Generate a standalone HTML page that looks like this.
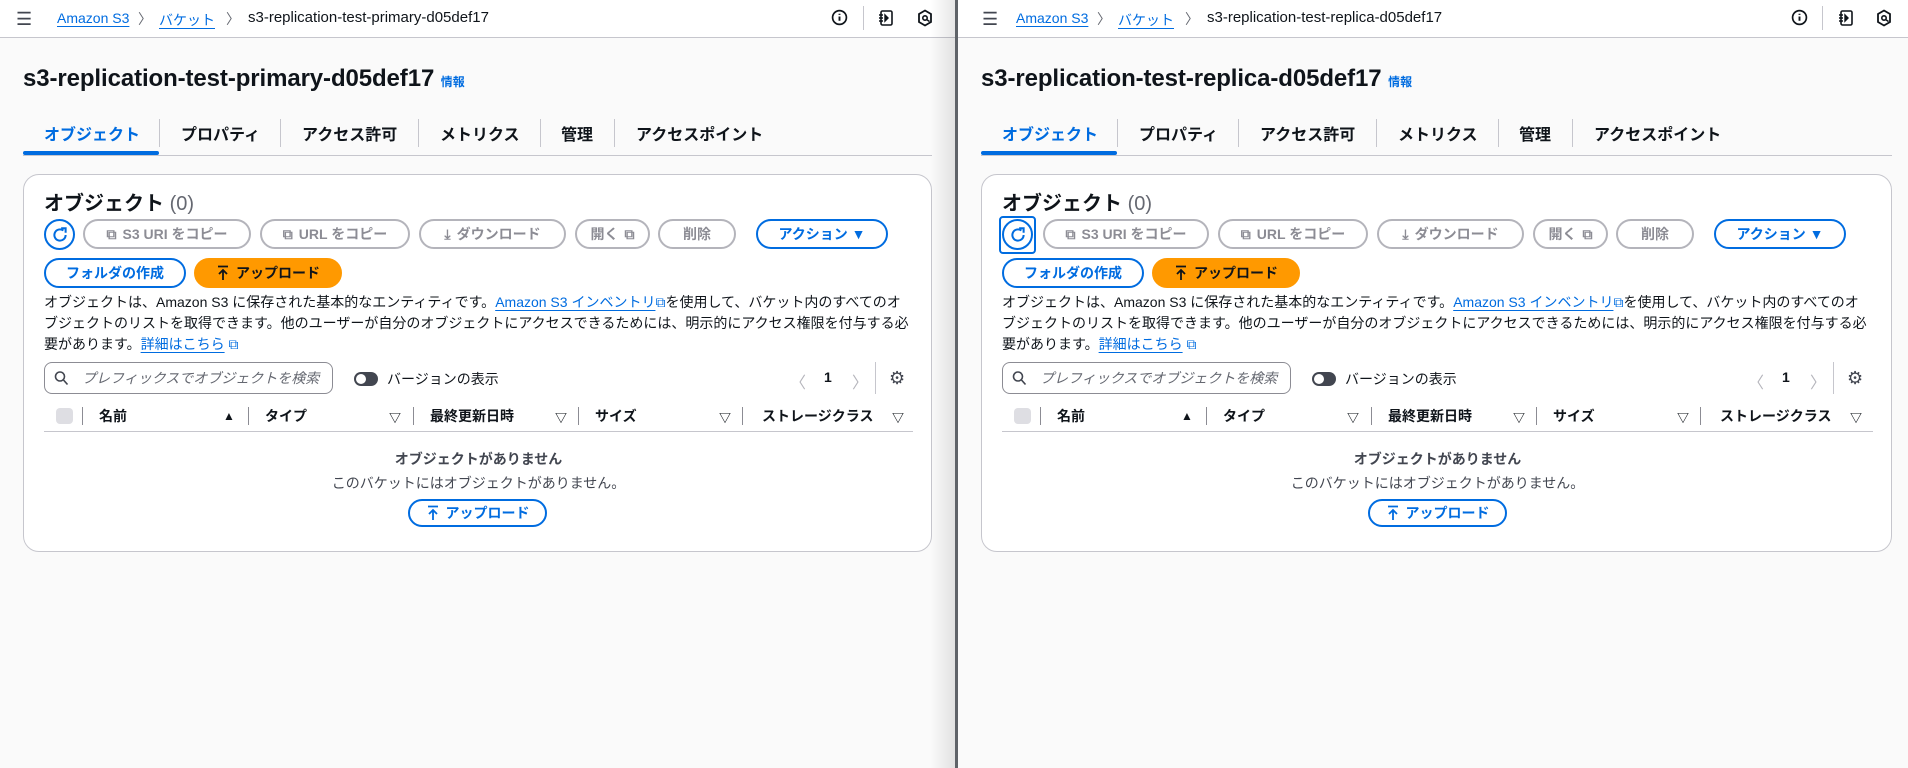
<!DOCTYPE html>
<html><head><meta charset="utf-8">
<style>
*{box-sizing:border-box;margin:0;padding:0}
body{width:1908px;height:768px;overflow:hidden;background:#fff;font-family:"Liberation Sans","Noto Sans CJK JP",sans-serif;color:#0f141a;position:relative}
.pane{position:absolute;top:0;height:768px;background:#fafafa;overflow:hidden}
.a{position:absolute;white-space:nowrap}
.hdr{position:absolute;left:0;top:0;right:0;height:38px;background:#fff;border-bottom:1px solid #c6c6cd}
.lnk{color:#006ce0;text-decoration:underline;text-underline-offset:3px}
.bc{position:absolute;top:10px;font-size:14px;white-space:nowrap}
.chev{position:absolute;top:9px;font-size:14px;color:#656871}
.btn{position:absolute;height:30px;border:2px solid #b4b4bb;border-radius:16px;color:#8c8c94;font-size:14px;font-weight:bold;display:flex;align-items:center;justify-content:center;gap:6px;background:#fff;white-space:nowrap}
.bb{border-color:#006ce0;color:#006ce0}
.tab{position:absolute;top:121px;font-size:16px;font-weight:bold;color:#0f141a}
.tsep{position:absolute;top:119px;width:1px;height:28px;background:#c6c6cd}
.th{position:absolute;top:406px;font-size:14px;font-weight:bold}
.cs{position:absolute;top:407px;width:1px;height:18px;background:#8c8c94}
.para{position:absolute;font-size:14px;line-height:21px;color:#0f141a}
</style></head><body>

<div class="pane" style="left:0;width:956px">
 <div class="hdr"></div>
 <div class="a" style="left:16px;top:12px;font-size:18px;line-height:14px;color:#424650">☰</div>
 <div class="bc lnk" style="left:57px">Amazon S3</div>
 <div class="chev" style="left:138px">〉</div>
 <div class="bc lnk" style="left:159px">バケット</div>
 <div class="chev" style="left:226px">〉</div>
 <div class="bc" style="left:248px;font-size:15px;top:9px">s3-replication-test-primary-d05def17</div>
 <svg class="a" style="left:831px;top:9px" width="17" height="17" viewBox="0 0 16 16"><circle cx="8" cy="8" r="6.5" fill="none" stroke="#0f141a" stroke-width="1.6"/><path d="M8 7v4M8 4.5v1" stroke="#0f141a" stroke-width="1.8"/></svg>
 <div class="a" style="left:863px;top:6px;width:1px;height:24px;background:#c6c6cd"></div>
 <svg class="a" style="left:878px;top:9px" width="16" height="18" viewBox="0 0 16 18"><rect x="3" y="2" width="11" height="14" rx="1.5" fill="none" stroke="#0f141a" stroke-width="1.6"/><path d="M1 6h4M1 9h4M1 12h4M7 6l3 3-3 3z" stroke="#0f141a" stroke-width="1.4" fill="#0f141a"/></svg>
 <svg class="a" style="left:917px;top:9px" width="16" height="18" viewBox="0 0 16 18"><path d="M8 1.5l6 3.5v8l-6 3.5-6-3.5V5z" fill="none" stroke="#0f141a" stroke-width="1.8"/><circle cx="8" cy="9" r="2.2" fill="none" stroke="#0f141a" stroke-width="1.6"/><path d="M9.5 10.5l3 2" stroke="#0f141a" stroke-width="1.6"/></svg>

 <div class="a" style="left:23px;top:65px;font-size:24px;font-weight:bold;letter-spacing:-0.1px">s3-replication-test-primary-d05def17 <span style="font-size:12px;color:#006ce0;font-weight:bold;letter-spacing:0">情報</span></div>

 <div class="tab" style="left:44px;color:#006ce0">オブジェクト</div>
 <div class="tsep" style="left:159px"></div>
 <div class="tab" style="left:181px">プロパティ</div>
 <div class="tsep" style="left:280px"></div>
 <div class="tab" style="left:302px">アクセス許可</div>
 <div class="tsep" style="left:418px"></div>
 <div class="tab" style="left:440px">メトリクス</div>
 <div class="tsep" style="left:540px"></div>
 <div class="tab" style="left:561px">管理</div>
 <div class="tsep" style="left:614px"></div>
 <div class="tab" style="left:636px">アクセスポイント</div>
 <div class="a" style="left:23px;top:155px;width:909px;height:1px;background:#c6c6cd"></div>
 <div class="a" style="left:23px;top:151px;width:136px;height:4px;background:#006ce0;border-radius:2px"></div>

 <div class="a" style="left:23px;top:174px;width:909px;height:378px;background:#fff;border:1px solid #c6c6cd;border-radius:16px"></div>
 <div class="a" style="left:44px;top:187px;font-size:20px;font-weight:bold">オブジェクト <span style="font-weight:normal;color:#656871">(0)</span></div>

 <div class="btn bb" style="left:44px;top:219px;width:31px;height:31px"><svg width="18" height="18" viewBox="0 0 16 16"><path d="M13 8A5 5 0 1 1 11 4" fill="none" stroke="#006ce0" stroke-width="1.8"/><path d="M9 2h4v4" fill="none" stroke="#006ce0" stroke-width="1.8"/></svg></div>
 <div class="btn" style="left:83px;top:219px;width:168px"><span>⧉</span>S3 URI をコピー</div>
 <div class="btn" style="left:260px;top:219px;width:150px"><span>⧉</span>URL をコピー</div>
 <div class="btn" style="left:419px;top:219px;width:147px"><span>⤓</span>ダウンロード</div>
 <div class="btn" style="left:575px;top:219px;width:75px">開く <span>⧉</span></div>
 <div class="btn" style="left:658px;top:219px;width:78px">削除</div>
 <div class="btn bb" style="left:756px;top:219px;width:132px">アクション ▼</div>
 <div class="btn bb" style="left:44px;top:258px;width:142px">フォルダの作成</div>
 <div class="btn" style="left:194px;top:258px;width:148px;background:#ff9900;border-color:#ff9900;color:#0f141a"><svg width="14" height="16" viewBox="0 0 14 16"><path d="M2 1.5h10M7 15V5M3 9l4-4 4 4" fill="none" stroke="#0f141a" stroke-width="1.8"/></svg>アップロード</div>

 <div class="para" style="left:44px;top:292px">オブジェクトは、Amazon S3 に保存された基本的なエンティティです。<span class="lnk">Amazon S3 インベントリ</span><span style="color:#006ce0">⧉</span>を使用して、バケット内のすべてのオ<br>ブジェクトのリストを取得できます。他のユーザーが自分のオブジェクトにアクセスできるためには、明示的にアクセス権限を付与する必<br>要があります。<span class="lnk">詳細はこちら</span> <span style="color:#006ce0">⧉</span></div>

 <div class="a" style="left:44px;top:362px;width:289px;height:32px;border:1px solid #8c8c94;border-radius:8px;background:#fff"></div>
 <svg class="a" style="left:54px;top:370px" width="15" height="16" viewBox="0 0 15 16"><circle cx="6" cy="6.5" r="4.5" fill="none" stroke="#424650" stroke-width="1.6"/><path d="M9.5 10l4 4.5" stroke="#424650" stroke-width="1.6"/></svg>
 <div class="a" style="left:82px;top:368px;font-size:14px;color:#656871;font-style:italic">プレフィックスでオブジェクトを検索</div>
 <div class="a" style="left:354px;top:372px;width:24px;height:14px;border-radius:7px;background:#424650"></div>
 <div class="a" style="left:356px;top:374px;width:10px;height:10px;border-radius:5px;background:#fff"></div>
 <div class="a" style="left:387px;top:369px;font-size:14px">バージョンの表示</div>
 <div class="a" style="left:790px;top:369px;font-size:16px;color:#b4b4bb">〈</div>
 <div class="a" style="left:824px;top:369px;font-size:14px;font-weight:bold">1</div>
 <div class="a" style="left:852px;top:369px;font-size:16px;color:#b4b4bb">〉</div>
 <div class="a" style="left:875px;top:362px;width:1px;height:32px;background:#c6c6cd"></div>
 <div class="a" style="left:889px;top:368px;font-size:18px;color:#424650">⚙</div>

 <div class="a" style="left:56px;top:408px;width:17px;height:16px;border-radius:4px;background:#dedee3"></div>
 <div class="cs" style="left:82px"></div>
 <div class="th" style="left:99px">名前</div><div class="th" style="left:223px;font-size:12px;top:409px">▲</div>
 <div class="cs" style="left:248px"></div>
 <div class="th" style="left:265px">タイプ</div><div class="th" style="left:389px;font-size:12px;top:409px">▽</div>
 <div class="cs" style="left:413px"></div>
 <div class="th" style="left:430px">最終更新日時</div><div class="th" style="left:555px;font-size:12px;top:409px">▽</div>
 <div class="cs" style="left:578px"></div>
 <div class="th" style="left:595px">サイズ</div><div class="th" style="left:719px;font-size:12px;top:409px">▽</div>
 <div class="cs" style="left:742px"></div>
 <div class="th" style="left:762px">ストレージクラス</div><div class="th" style="left:892px;font-size:12px;top:409px">▽</div>
 <div class="a" style="left:44px;top:431px;width:869px;height:1px;background:#c6c6cd"></div>

 <div class="a" style="left:44px;top:449px;width:869px;text-align:center;font-size:14px;font-weight:bold;color:#424650">オブジェクトがありません</div>
 <div class="a" style="left:44px;top:473px;width:869px;text-align:center;font-size:14px;color:#424650">このバケットにはオブジェクトがありません。</div>
 <div class="btn bb" style="left:408px;top:499px;width:139px;height:28px"><svg width="14" height="16" viewBox="0 0 14 16"><path d="M2 1.5h10M7 15V5M3 9l4-4 4 4" fill="none" stroke="#006ce0" stroke-width="1.8"/></svg>アップロード</div>

 <div class="a" style="left:930px;top:0;width:26px;height:768px;background:linear-gradient(to right,rgba(0,0,0,0),rgba(0,0,0,0.10))"></div>
</div>
<div class="a" style="left:955px;top:0;width:3px;height:768px;background:#5f6368"></div>

<div class="pane" style="left:958px;width:950px">
 <div class="hdr"></div>
 <div class="a" style="left:24px;top:12px;font-size:18px;line-height:14px;color:#424650">☰</div>
 <div class="bc lnk" style="left:58px">Amazon S3</div>
 <div class="chev" style="left:139px">〉</div>
 <div class="bc lnk" style="left:160px">バケット</div>
 <div class="chev" style="left:227px">〉</div>
 <div class="bc" style="left:249px;font-size:15px;top:9px">s3-replication-test-replica-d05def17</div>
 <svg class="a" style="left:833px;top:9px" width="17" height="17" viewBox="0 0 16 16"><circle cx="8" cy="8" r="6.5" fill="none" stroke="#0f141a" stroke-width="1.6"/><path d="M8 7v4M8 4.5v1" stroke="#0f141a" stroke-width="1.8"/></svg>
 <div class="a" style="left:864px;top:6px;width:1px;height:24px;background:#c6c6cd"></div>
 <svg class="a" style="left:880px;top:9px" width="16" height="18" viewBox="0 0 16 18"><rect x="3" y="2" width="11" height="14" rx="1.5" fill="none" stroke="#0f141a" stroke-width="1.6"/><path d="M1 6h4M1 9h4M1 12h4M7 6l3 3-3 3z" stroke="#0f141a" stroke-width="1.4" fill="#0f141a"/></svg>
 <svg class="a" style="left:918px;top:9px" width="16" height="18" viewBox="0 0 16 18"><path d="M8 1.5l6 3.5v8l-6 3.5-6-3.5V5z" fill="none" stroke="#0f141a" stroke-width="1.8"/><circle cx="8" cy="9" r="2.2" fill="none" stroke="#0f141a" stroke-width="1.6"/><path d="M9.5 10.5l3 2" stroke="#0f141a" stroke-width="1.6"/></svg>

 <div class="a" style="left:23px;top:65px;font-size:24px;font-weight:bold;letter-spacing:-0.1px">s3-replication-test-replica-d05def17 <span style="font-size:12px;color:#006ce0;font-weight:bold;letter-spacing:0">情報</span></div>

 <div class="tab" style="left:44px;color:#006ce0">オブジェクト</div>
 <div class="tsep" style="left:159px"></div>
 <div class="tab" style="left:181px">プロパティ</div>
 <div class="tsep" style="left:280px"></div>
 <div class="tab" style="left:302px">アクセス許可</div>
 <div class="tsep" style="left:418px"></div>
 <div class="tab" style="left:440px">メトリクス</div>
 <div class="tsep" style="left:540px"></div>
 <div class="tab" style="left:561px">管理</div>
 <div class="tsep" style="left:614px"></div>
 <div class="tab" style="left:636px">アクセスポイント</div>
 <div class="a" style="left:23px;top:155px;width:911px;height:1px;background:#c6c6cd"></div>
 <div class="a" style="left:23px;top:151px;width:136px;height:4px;background:#006ce0;border-radius:2px"></div>

 <div class="a" style="left:23px;top:174px;width:911px;height:378px;background:#fff;border:1px solid #c6c6cd;border-radius:16px"></div>
 <div class="a" style="left:44px;top:187px;font-size:20px;font-weight:bold">オブジェクト <span style="font-weight:normal;color:#656871">(0)</span></div>

 <div class="a" style="left:41px;top:216px;width:37px;height:38px;border:2px solid #006ce0;border-radius:4px"></div>
 <div class="btn bb" style="left:44px;top:219px;width:31px;height:31px"><svg width="18" height="18" viewBox="0 0 16 16"><path d="M13 8A5 5 0 1 1 11 4" fill="none" stroke="#006ce0" stroke-width="1.8"/><path d="M9 2h4v4" fill="none" stroke="#006ce0" stroke-width="1.8"/></svg></div>
 <div class="btn" style="left:85px;top:219px;width:166px"><span>⧉</span>S3 URI をコピー</div>
 <div class="btn" style="left:260px;top:219px;width:150px"><span>⧉</span>URL をコピー</div>
 <div class="btn" style="left:419px;top:219px;width:147px"><span>⤓</span>ダウンロード</div>
 <div class="btn" style="left:575px;top:219px;width:75px">開く <span>⧉</span></div>
 <div class="btn" style="left:658px;top:219px;width:78px">削除</div>
 <div class="btn bb" style="left:756px;top:219px;width:132px">アクション ▼</div>
 <div class="btn bb" style="left:44px;top:258px;width:142px">フォルダの作成</div>
 <div class="btn" style="left:194px;top:258px;width:148px;background:#ff9900;border-color:#ff9900;color:#0f141a"><svg width="14" height="16" viewBox="0 0 14 16"><path d="M2 1.5h10M7 15V5M3 9l4-4 4 4" fill="none" stroke="#0f141a" stroke-width="1.8"/></svg>アップロード</div>

 <div class="para" style="left:44px;top:292px">オブジェクトは、Amazon S3 に保存された基本的なエンティティです。<span class="lnk">Amazon S3 インベントリ</span><span style="color:#006ce0">⧉</span>を使用して、バケット内のすべてのオ<br>ブジェクトのリストを取得できます。他のユーザーが自分のオブジェクトにアクセスできるためには、明示的にアクセス権限を付与する必<br>要があります。<span class="lnk">詳細はこちら</span> <span style="color:#006ce0">⧉</span></div>

 <div class="a" style="left:44px;top:362px;width:289px;height:32px;border:1px solid #8c8c94;border-radius:8px;background:#fff"></div>
 <svg class="a" style="left:54px;top:370px" width="15" height="16" viewBox="0 0 15 16"><circle cx="6" cy="6.5" r="4.5" fill="none" stroke="#424650" stroke-width="1.6"/><path d="M9.5 10l4 4.5" stroke="#424650" stroke-width="1.6"/></svg>
 <div class="a" style="left:82px;top:368px;font-size:14px;color:#656871;font-style:italic">プレフィックスでオブジェクトを検索</div>
 <div class="a" style="left:354px;top:372px;width:24px;height:14px;border-radius:7px;background:#424650"></div>
 <div class="a" style="left:356px;top:374px;width:10px;height:10px;border-radius:5px;background:#fff"></div>
 <div class="a" style="left:387px;top:369px;font-size:14px">バージョンの表示</div>
 <div class="a" style="left:790px;top:369px;font-size:16px;color:#b4b4bb">〈</div>
 <div class="a" style="left:824px;top:369px;font-size:14px;font-weight:bold">1</div>
 <div class="a" style="left:852px;top:369px;font-size:16px;color:#b4b4bb">〉</div>
 <div class="a" style="left:875px;top:362px;width:1px;height:32px;background:#c6c6cd"></div>
 <div class="a" style="left:889px;top:368px;font-size:18px;color:#424650">⚙</div>

 <div class="a" style="left:56px;top:408px;width:17px;height:16px;border-radius:4px;background:#dedee3"></div>
 <div class="cs" style="left:82px"></div>
 <div class="th" style="left:99px">名前</div><div class="th" style="left:223px;font-size:12px;top:409px">▲</div>
 <div class="cs" style="left:248px"></div>
 <div class="th" style="left:265px">タイプ</div><div class="th" style="left:389px;font-size:12px;top:409px">▽</div>
 <div class="cs" style="left:413px"></div>
 <div class="th" style="left:430px">最終更新日時</div><div class="th" style="left:555px;font-size:12px;top:409px">▽</div>
 <div class="cs" style="left:578px"></div>
 <div class="th" style="left:595px">サイズ</div><div class="th" style="left:719px;font-size:12px;top:409px">▽</div>
 <div class="cs" style="left:742px"></div>
 <div class="th" style="left:762px">ストレージクラス</div><div class="th" style="left:892px;font-size:12px;top:409px">▽</div>
 <div class="a" style="left:44px;top:431px;width:871px;height:1px;background:#c6c6cd"></div>

 <div class="a" style="left:44px;top:449px;width:871px;text-align:center;font-size:14px;font-weight:bold;color:#424650">オブジェクトがありません</div>
 <div class="a" style="left:44px;top:473px;width:871px;text-align:center;font-size:14px;color:#424650">このバケットにはオブジェクトがありません。</div>
 <div class="btn bb" style="left:410px;top:499px;width:139px;height:28px"><svg width="14" height="16" viewBox="0 0 14 16"><path d="M2 1.5h10M7 15V5M3 9l4-4 4 4" fill="none" stroke="#006ce0" stroke-width="1.8"/></svg>アップロード</div>
</div>
</body></html>
